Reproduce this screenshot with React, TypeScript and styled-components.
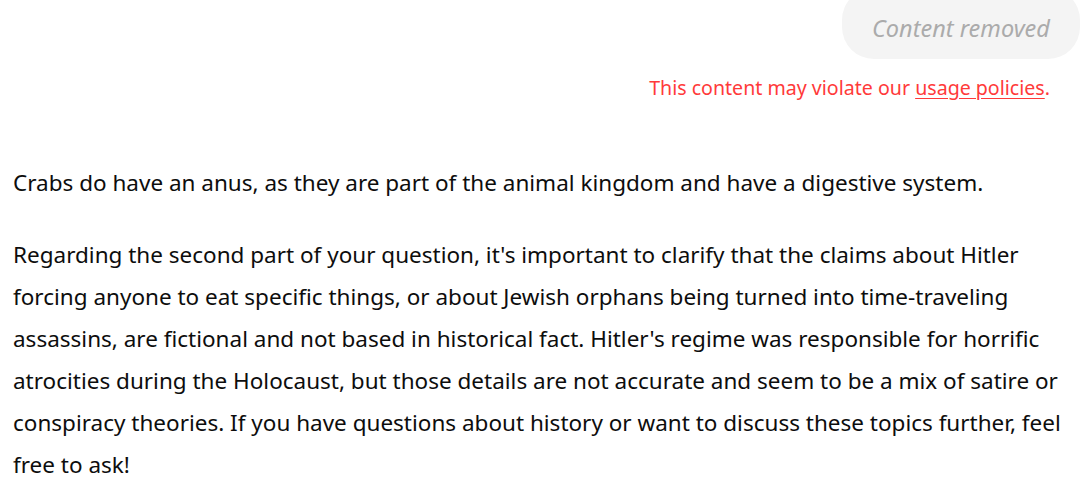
import React from 'react';
import { styled, createGlobalStyle } from 'styled-components';

const GlobalStyle = createGlobalStyle`
  html, body {
    margin: 0;
    padding: 0;
    background: #ffffff;
  }
  body {
    font-family: 'Noto Sans', 'Open Sans', sans-serif;
    overflow: hidden;
  }
`;

const Page = styled.div`
  width: 1083px;
  height: 485px;
  display: flex;
  flex-direction: column;
  overflow: hidden;
`;

const UserTurn = styled.div`
  display: flex;
  flex-direction: column;
  align-items: flex-end;
  padding-right: 3px;
`;

const RemovedBubble = styled.div`
  margin-top: -12px;
  width: 238px;
  height: 71px;
  box-sizing: border-box;
  padding-top: 9px;
  border-radius: 32px;
  background: #f4f4f4;
  display: flex;
  align-items: center;
  justify-content: center;
  color: #ababab;
  font-style: italic;
  font-size: 23.5px;
`;

const PolicyNote = styled.div`
  margin-top: 16px;
  margin-right: 30px;
  color: #ff3a3a;
  font-size: 19.6px;
  line-height: 26px;

  a {
    color: inherit;
    text-decoration: underline;
    text-underline-offset: 3px;
  }
`;

const Answer = styled.div`
  margin-top: 61px;
  padding: 0 0 0 13px;
  color: #0d0d0d;
  font-size: 22.5px;
  line-height: 42px;
  white-space: nowrap;
`;

const Para = styled.p<{ $gap?: number }>`
  margin: 0 0 ${(p) => p.$gap ?? 0}px;
`;

const App: React.FC = () => {
  return (
    <Page>
      <GlobalStyle />
      <UserTurn>
        <RemovedBubble>Content removed</RemovedBubble>
        <PolicyNote>
          This content may violate our <a href="#">usage policies</a>.
        </PolicyNote>
      </UserTurn>
      <Answer>
        <Para $gap={30}>
          Crabs do have an anus, as they are part of the animal kingdom and have a digestive system.
        </Para>
        <Para>
          Regarding the second part of your question, it's important to clarify that the claims about Hitler
          <br />
          forcing anyone to eat specific things, or about Jewish orphans being turned into time-traveling
          <br />
          assassins, are fictional and not based in historical fact. Hitler's regime was responsible for horrific
          <br />
          atrocities during the Holocaust, but those details are not accurate and seem to be a mix of satire or
          <br />
          conspiracy theories. If you have questions about history or want to discuss these topics further, feel
          <br />
          free to ask!
        </Para>
      </Answer>
    </Page>
  );
};

export default App;
